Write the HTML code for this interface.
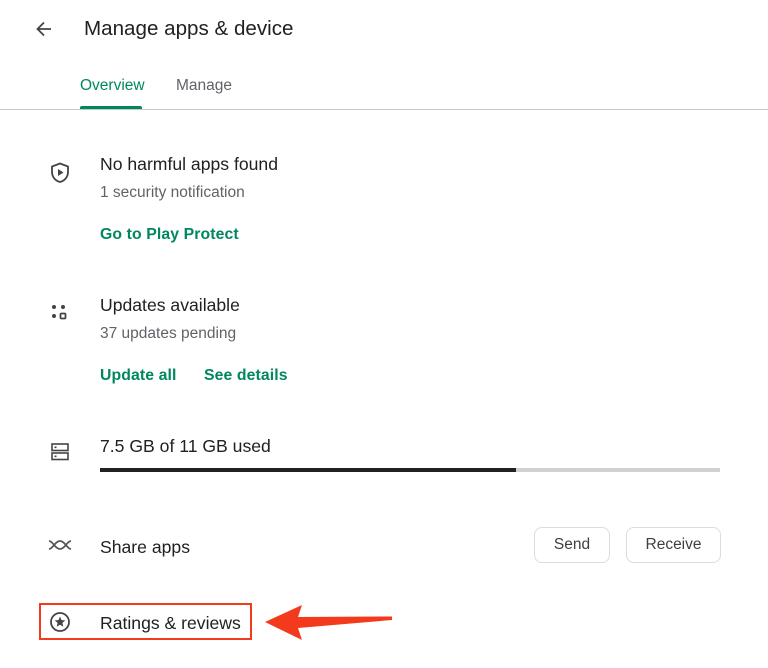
<!DOCTYPE html><html><head><style>
body{margin:0;width:768px;height:668px;background:#fff;position:relative;overflow:hidden;font-family:"Liberation Sans",Arial,sans-serif;color:#202124}
.a{position:absolute;white-space:nowrap}
.h{font-size:17.6px;color:#202124}
.s{font-size:15.5px;color:#5f6368}
.l{font-size:15.8px;color:#01875f;font-weight:bold;letter-spacing:0.1px}
.btn{position:absolute;border:1px solid #dadce0;border-radius:8px;height:34px;font-size:15.5px;color:#3c4043;text-align:center;line-height:34px}
</style></head><body>
<svg class="a" style="left:34px;top:19px" width="20" height="20" viewBox="0 0 20 20"><path d="M17 10H4M10 3.5L3.5 10L10 16.5" stroke="#444" stroke-width="1.8" fill="none"/></svg>
<div class="a" style="left:84px;top:17px;font-size:20.6px;color:#202124">Manage apps &amp; device</div>
<div class="a" style="left:80px;top:77px;font-size:15.5px;color:#01875f">Overview</div>
<div class="a" style="left:176px;top:77px;font-size:15.5px;color:#5f6368">Manage</div>
<div class="a" style="left:80px;top:106px;width:62px;height:3px;background:#01875f;border-radius:2px 2px 0 0"></div>
<div class="a" style="left:0;top:108.5px;width:768px;height:1px;background:#c8c8c8"></div>

<svg class="a" style="left:50px;top:162px" width="20" height="22" viewBox="0 0 20 22"><path d="M10 1.5L2 4.5V10c0 5 3.4 8.8 8 10 4.6-1.2 8-5 8-10V4.5z" stroke="#444" stroke-width="1.8" fill="none"/><path d="M8 7v7l5.5-3.5z" fill="#444"/></svg>
<div class="a h" style="left:100px;top:154px">No harmful apps found</div>
<div class="a s" style="left:100px;top:184px">1 security notification</div>
<div class="a l" style="left:100px;top:226px">Go to Play Protect</div>

<svg class="a" style="left:51px;top:304px" width="18" height="16" viewBox="0 0 18 16"><circle cx="3" cy="3" r="2" fill="#444"/><circle cx="12" cy="3" r="2" fill="#444"/><circle cx="3" cy="12" r="2" fill="#444"/><rect x="9.5" y="9.5" width="5" height="5" rx="1" stroke="#444" stroke-width="1.8" fill="none"/></svg>
<div class="a h" style="left:100px;top:295px">Updates available</div>
<div class="a s" style="left:100px;top:325px">37 updates pending</div>
<div class="a l" style="left:100px;top:367px">Update all</div>
<div class="a l" style="left:204px;top:367px">See details</div>

<svg class="a" style="left:51px;top:443px" width="18" height="18" viewBox="0 0 18 18"><rect x="1" y="1" width="16" height="6.5" stroke="#444" stroke-width="1.6" fill="none"/><rect x="1" y="10" width="16" height="6.5" stroke="#444" stroke-width="1.6" fill="none"/><rect x="3.5" y="3.5" width="2" height="1.6" fill="#444"/><rect x="3.5" y="12.5" width="2" height="1.6" fill="#444"/></svg>
<div class="a h" style="left:100px;top:436px">7.5 GB of 11 GB used</div>
<div class="a" style="left:100px;top:468px;width:620px;height:4px;background:#d0d0d0"></div>
<div class="a" style="left:100px;top:468px;width:416px;height:4px;background:#202124"></div>

<svg class="a" style="left:48px;top:539px" width="24" height="12" viewBox="0 0 24 12"><path d="M1 2c4 0 6 8 11 8s7-8 11-8M1 10c4 0 6-8 11-8s7 8 11 8" stroke="#555" stroke-width="1.7" fill="none"/></svg>
<div class="a h" style="left:100px;top:537px">Share apps</div>
<div class="btn" style="left:534px;top:527px;width:74px">Send</div>
<div class="btn" style="left:626px;top:527px;width:93px">Receive</div>

<svg class="a" style="left:49px;top:611px" width="22" height="22" viewBox="0 0 22 22"><circle cx="11" cy="11" r="9" stroke="#444" stroke-width="1.8" fill="none"/><path d="M11 5.5l1.5 3.6 3.8.3-2.9 2.5.9 3.8L11 13.7l-3.3 2 .9-3.8-2.9-2.5 3.8-.3z" fill="#444"/></svg>
<div class="a h" style="left:100px;top:613px">Ratings &amp; reviews</div>
<div class="a" style="left:39px;top:603px;width:209px;height:33px;border:2px solid #f43a1c"></div>
<svg class="a" style="left:260px;top:600px" width="140" height="45" viewBox="0 0 140 45"><path d="M5 22L42 5L38 17L132 16.5L132 20L38 28L42 40Z" fill="#f43a1c"/></svg>
</body></html>
